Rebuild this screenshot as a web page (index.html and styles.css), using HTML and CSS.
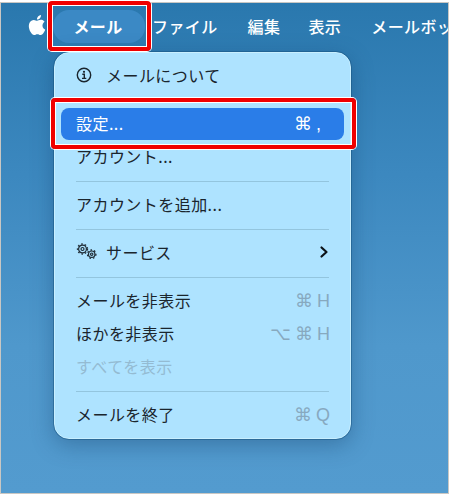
FILE: index.html
```html
<!DOCTYPE html>
<html lang="ja">
<head>
<meta charset="utf-8">
<title>メール</title>
<link rel="stylesheet" href="styles.css">
</head>
<body>
<div class="shot">
  <nav class="bar">
    <svg class="apple" viewBox="0 0 24 24"><path d="M12.152 6.896c-.948 0-2.415-1.078-3.96-1.04-2.04.027-3.91 1.183-4.961 3.014-2.117 3.675-.546 9.103 1.519 12.09 1.013 1.454 2.208 3.09 3.792 3.039 1.52-.065 2.09-.987 3.935-.987 1.831 0 2.35.987 3.96.948 1.637-.026 2.676-1.48 3.676-2.948 1.156-1.688 1.636-3.325 1.662-3.415-.039-.013-3.182-1.221-3.22-4.857-.026-3.04 2.48-4.494 2.597-4.559-1.429-2.09-3.623-2.324-4.39-2.376-2-.156-3.675 1.09-4.61 1.09zM15.53 3.83c.843-1.012 1.4-2.427 1.245-3.83-1.207.052-2.662.805-3.532 1.818-.78.896-1.454 2.338-1.273 3.714 1.338.104 2.715-.688 3.559-1.701"/></svg>
    <span class="pill">メール</span>
    <span class="bar-item file">ファイル</span>
    <span class="bar-item edit">編集</span>
    <span class="bar-item view">表示</span>
    <span class="bar-item box">メールボッ</span>
  </nav>

  <div class="menu">
    <div class="row">
      <svg class="info" viewBox="0 0 16 16"><circle cx="8" cy="8" r="6.7"/><circle class="dot" cx="8" cy="4.8" r="1.1"/><path d="M6.3 7.3H8.3V11.3M6 11.4H10.3"/></svg>
      <span class="label">メールについて</span>
    </div>
    <div class="sep"></div>
    <div class="row selected">
      <span class="label">設定...</span>
      <span class="keys"><span class="sym">⌘</span><span class="ch">,</span><span class="pad"></span></span>
    </div>
    <div class="row"><span class="label">アカウント...</span></div>
    <div class="sep"></div>
    <div class="row"><span class="label">アカウントを追加...</span></div>
    <div class="sep"></div>
    <div class="row">
      <svg class="gears" viewBox="0 0 21 17">
        <circle cx="6.5" cy="6" r="3.9"/><circle cx="6.5" cy="6" r="1.5"/>
        <circle class="teeth" cx="6.5" cy="6" r="5"/>
        <circle cx="15.7" cy="11.2" r="3.2"/><circle cx="15.7" cy="11.2" r="1.2"/>
        <circle class="teeth" cx="15.7" cy="11.2" r="4.2"/>
      </svg>
      <span class="label">サービス</span>
      <svg class="chev" viewBox="0 0 10 14"><path d="M2.5 2.5 7.5 7 2.5 11.5"/></svg>
    </div>
    <div class="sep"></div>
    <div class="row"><span class="label">メールを非表示</span><span class="keys"><span class="sym">⌘</span><span class="ch">H</span></span></div>
    <div class="row"><span class="label">ほかを非表示</span><span class="keys"><span class="sym">⌥</span><span class="sym">⌘</span><span class="ch">H</span></span></div>
    <div class="row disabled"><span class="label">すべてを表示</span></div>
    <div class="sep"></div>
    <div class="row"><span class="label">メールを終了</span><span class="keys"><span class="sym">⌘</span><span class="ch">Q</span></span></div>
  </div>

  <div class="mark mark-bar"></div>
  <div class="mark mark-item"></div>
</div>
</body>
</html>
```

FILE: styles.css
```css
* { box-sizing: border-box; }
html, body { margin: 0; padding: 0; background: #fff; }
body {
  width: 450px;
  height: 495px;
  overflow: hidden;
  padding-top: 2px;
  font-family: "Noto Sans CJK JP", "Noto Sans", sans-serif;
}
.shot {
  position: relative;
  width: 449px;
  height: 492px;
  border: 1px solid #c9c7c3;
  background: linear-gradient(180deg, #2a78ae 0%, #3c88bf 35%, #4f98cc 70%, #539bcf 100%);
}
.bar {
  display: flex;
  align-items: center;
  height: 44px;
  padding-top: 3px;
  padding-left: 26px;
  color: #fff;
  font-size: 16px;
  white-space: nowrap;
  overflow: hidden;
}
.apple { width: 20px; height: 22px; fill: #fff; flex: none; margin-bottom: 3px; }
.pill {
  display: flex;
  align-items: center;
  justify-content: center;
  flex: none;
  width: 92px;
  height: 33px;
  margin-left: 6px;
  padding: 0 2px 2px 0;
  border-radius: 16px;
  background: #3b89c5;
  font-weight: 700;
  letter-spacing: .4px;
}
.bar-item { font-weight: 500; letter-spacing: .4px; flex: none; margin-bottom: 2px; }
.file { margin-left: 7px; }
.edit { margin-left: 30px; }
.view { margin-left: 28px; }
.box { margin-left: 30px; }
.menu {
  position: absolute;
  left: 53px;
  top: 49px;
  width: 297px;
  height: 387px;
  padding: 7px 0 8px;
  border-radius: 15px;
  background: #aee3ff;
  border: 1px solid #c8efff;
  outline: 1px solid rgba(20, 80, 125, .45);
  box-shadow: 0 6px 22px rgba(15, 55, 95, .35);
  color: #1a252d;
  font-size: 16px;
}
.row {
  display: flex;
  align-items: center;
  height: 33px;
  padding: 0 21px 4px;
  letter-spacing: .45px;
}
.label { flex: 1; white-space: nowrap; }
.keys {
  display: flex;
  align-items: center;
  gap: 4px;
  flex: none;
  margin-top: 2px;
  color: #87a9bf;
  font-family: "Liberation Sans", sans-serif;
  font-size: 18px;
  letter-spacing: 0;
}
.sym { font-family: "DejaVu Sans", sans-serif; font-size: 18px; line-height: 1; }
.ch { margin-right: -1px; line-height: 1; }
.pad { width: 5px; }
.sep { height: 1px; margin: 7px 21px; background: #93c5de; }
.selected {
  height: 32px;
  margin: 0 6px 1px;
  padding: 0 15px 3px;
  border-radius: 8px;
  background: #2a7de8;
  color: #fff;
}
.selected .keys { color: #fff; }
.disabled { color: #94bbd2; }
.info { width: 16px; height: 16px; margin: 0 14px 0 0; flex: none; fill: none; stroke: #1a252d; stroke-width: 1.4; }
.info .dot { fill: #1a252d; stroke: none; }
.gears { width: 21px; height: 17px; margin-right: 9px; flex: none; fill: none; stroke: #1f2c36; stroke-width: 1.2; }
.gears .teeth { stroke-width: 1.3; stroke-dasharray: 1.6 2; }
.chev { width: 10px; height: 14px; flex: none; fill: none; stroke: #0c1217; stroke-width: 2.2; stroke-linecap: round; stroke-linejoin: round; }
.mark {
  position: absolute;
  border: 4px solid #f00000;
  border-radius: 4px;
  box-shadow: 0 0 0 1px #fff, inset 0 0 0 1px #fff;
}
.mark-bar { left: 47px; top: -2px; width: 103px; height: 50px; }
.mark-item { left: 50px; top: 95px; width: 305px; height: 51px; }
```
